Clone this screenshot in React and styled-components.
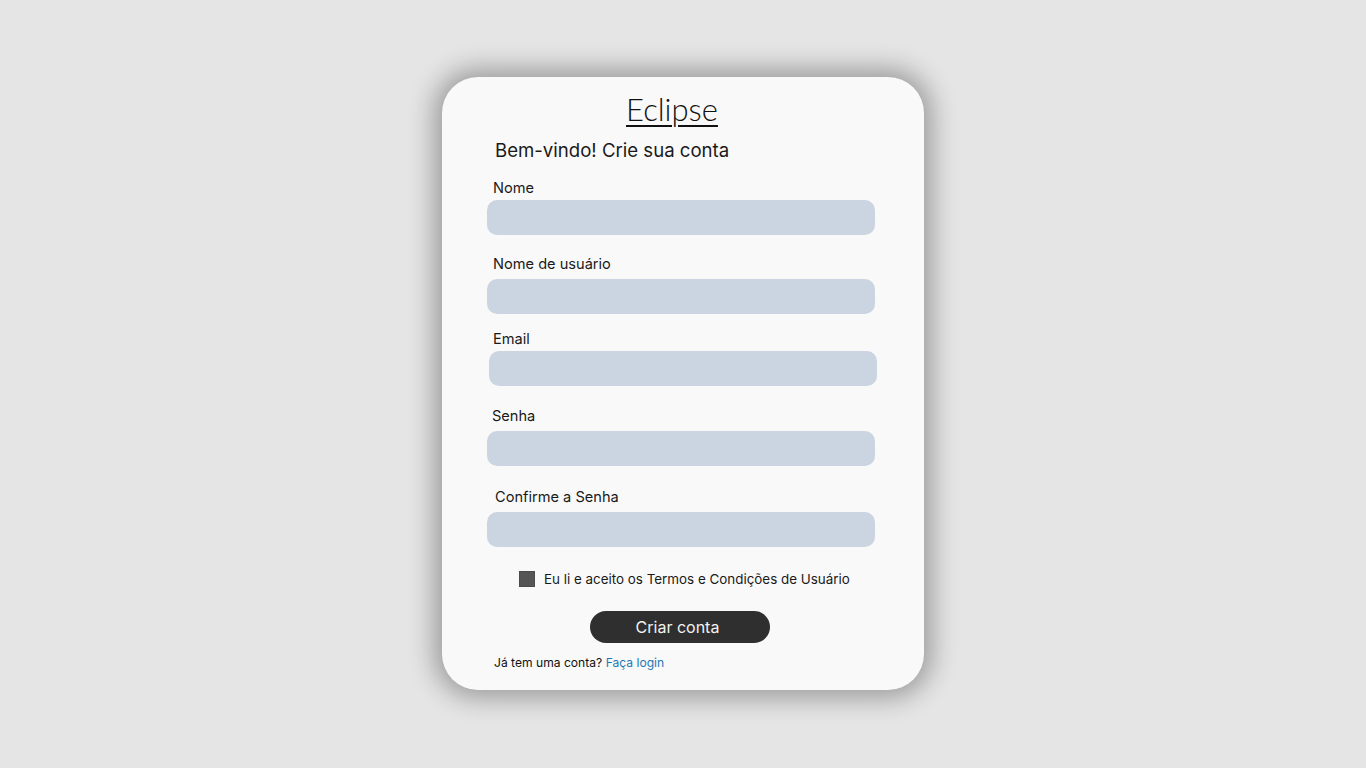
import React from 'react'
import styled, { createGlobalStyle } from 'styled-components'

const Global = createGlobalStyle`
  html, body {
    margin: 0;
    padding: 0;
    background: #e5e5e5;
  }
  body {
    font-family: Inter, "Liberation Sans", sans-serif;
  }
`

const fields = [
  { label: 'Nome', top: 17, gap: 3, labelX: 6, inputX: 0 },
  { label: 'Nome de usuário', top: 20, gap: 6, labelX: 6, inputX: 0 },
  { label: 'Email', top: 16, gap: 3, labelX: 6, inputX: 2 },
  { label: 'Senha', top: 21, gap: 6, labelX: 5, inputX: 0 },
  { label: 'Confirme a Senha', top: 22, gap: 6, labelX: 8, inputX: 0 },
]

const App = () => {
  return (
    <>
      <Global />
      <Page>
        <Card>
          <Title>Eclipse</Title>
          <Welcome>Bem-vindo! Crie sua conta</Welcome>
          {fields.map((f) => (
            <Field key={f.label} top={f.top}>
              <Label x={f.labelX}>{f.label}</Label>
              <Input x={f.inputX} gap={f.gap} />
            </Field>
          ))}
          <Terms>
            <Box />
            <span>Eu li e aceito os Termos e Condições de Usuário</span>
          </Terms>
          <Button>Criar conta</Button>
          <Footer>
            Já tem uma conta? <Link>Faça login</Link>
          </Footer>
        </Card>
      </Page>
    </>
  )
}

const Page = styled.div`
  display: flex;
  justify-content: center;
  align-items: flex-start;
  min-height: 768px;
  padding-top: 77px;
  box-sizing: border-box;
`

const Card = styled.div`
  width: 482px;
  height: 613px;
  box-sizing: border-box;
  background: #f9f9f9;
  border-radius: 36px;
  box-shadow: 0 0 26px 8px rgba(0, 0, 0, 0.32);
  padding: 14px 0 0 45px;
  display: flex;
  flex-direction: column;
  color: #111;
`

const Title = styled.h1`
  margin: 0 0 0 -45px;
  padding-right: 22px;
  text-align: center;
  font-family: Lato, "DejaVu Sans", sans-serif;
  font-weight: 300;
  font-size: 31px;
  line-height: 36px;
  text-decoration: underline;
  text-decoration-thickness: 1.5px;
  text-underline-offset: 4px;
  color: #111;
`

const Welcome = styled.div`
  margin: 11px 0 0 8px;
  font-size: 18.6px;
  line-height: 24px;
  color: #1a1a1a;
`

const Field = styled.div`
  display: flex;
  flex-direction: column;
  margin-top: ${(p) => p.top}px;
`

const Label = styled.label`
  margin-left: ${(p) => p.x}px;
  font-size: 14.6px;
  line-height: 18px;
  color: #1a1a1a;
`

const Input = styled.div`
  margin: ${(p) => p.gap}px 0 0 ${(p) => p.x}px;
  width: 388px;
  height: 35px;
  border-radius: 10px;
  background: #cbd5e1;
`

const Terms = styled.div`
  display: flex;
  align-items: center;
  gap: 9px;
  margin: 24px 0 0 32px;
  font-size: 13.4px;
  line-height: 16px;
  color: #1a1a1a;
`

const Box = styled.div`
  width: 16px;
  height: 16px;
  background: #555;
  border: 1px solid #4a4a4a;
  box-sizing: border-box;
`

const Button = styled.button`
  align-self: flex-start;
  margin: 24px 0 0 103px;
  width: 180px;
  height: 32px;
  border: none;
  border-radius: 16px;
  background: #2f2f2f;
  color: #f2f2f2;
  font-family: Inter, "Liberation Sans", sans-serif;
  font-size: 16px;
  padding: 0 5px 0 0;
`

const Footer = styled.div`
  margin: 12px 0 0 7px;
  font-size: 12.1px;
  line-height: 16px;
  color: #111;
`

const Link = styled.a`
  color: #1f78b4;
  cursor: pointer;
`

export default App
